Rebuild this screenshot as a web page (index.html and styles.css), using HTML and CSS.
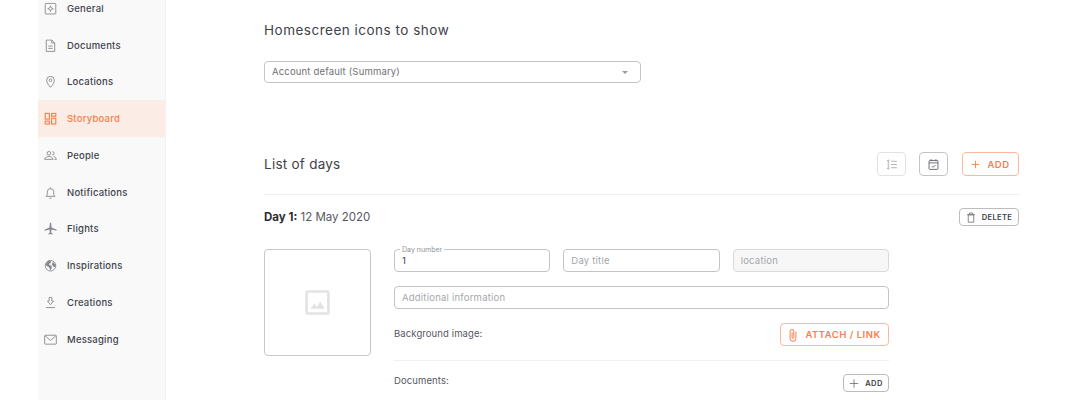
FILE: index.html
```html
<!DOCTYPE html>
<html lang="en">
<head>
    <meta charset="UTF-8">
    <title>Storyboard</title>
    <link rel="stylesheet" href="styles.css">
</head>
<body>
    <div class="app">
        <!-- Sidebar -->
        <nav class="sidebar">
            <a class="nav-item"><svg class="nav-icon" viewBox="0 0 16 16"><rect x="1.500" y="1.500" width="13" height="13" rx="1"/><circle cx="8" cy="8" r="2"/><path d="M8 4.300v1.700M8 10v1.700M4.300 8H6M10 8h1.700"/></svg>General</a>
            <a class="nav-item"><svg class="nav-icon" viewBox="0 0 16 16"><path d="M2.800 1h6.700l3.700 3.700V15H2.800zM9.500 1v3.700h3.700M5.300 8.500h5.400M5.300 11.300h5.400"/></svg>Documents</a>
            <a class="nav-item"><svg class="nav-icon" viewBox="0 0 16 16"><path d="M8 15C5.300 11.800 3.300 9.200 3.300 6.200a4.700 4.700 0 0 1 9.400 0c0 3-2 5.600-4.700 8.800z"/><circle cx="8" cy="6.200" r="1.600"/></svg>Locations</a>
            <a class="nav-item active"><svg class="nav-icon" viewBox="0 0 16 16"><rect x="1.500" y="1.500" width="5.200" height="7"/><rect x="9.300" y="1.500" width="5.200" height="3.500"/><rect x="1.500" y="11" width="5.200" height="3.500"/><rect x="9.300" y="7.500" width="5.200" height="7"/></svg>Storyboard</a>
            <a class="nav-item"><svg class="nav-icon" viewBox="0 0 16 16"><circle cx="6" cy="5" r="2.200"/><path d="M.8 12.500c.5-2.500 2.700-3.500 5.200-3.500s4.700 1 5.200 3.500zM10.300 3a2 2 0 0 1 0 4M12 8.800c1.700.4 2.700 1.500 3.200 3.700h-2.400"/></svg>People</a>
            <a class="nav-item"><svg class="nav-icon" viewBox="0 0 16 16"><path d="M2.500 12.500h11l-1.500-2V7a4 4 0 0 0-8 0v3.500zM6.800 14.800h2.400M8 1.500v1.500"/></svg>Notifications</a>
            <a class="nav-item"><svg class="nav-icon solid" viewBox="0 0 16 16"><path d="M7.300 .8h1.400l.6 5.700 6.200 2.700v1.300L9.200 9l-.4 3.800 1.900 1.300v.9L8 14.500 5.300 15v-.9l1.900-1.300L6.800 9 .5 10.500V9.200l6.200-2.700z"/></svg>Flights</a>
            <a class="nav-item"><svg class="nav-icon" viewBox="0 0 16 16"><circle cx="8" cy="8" r="6.500"/><path class="fill" d="M2.500 5.500l3-3.500 3.500.5-1 2.500-2 .5 1 2 2.500.5v2.500L8 14 6 9.500 2.500 8zM11 3.500L14 6.500l.5 2.500-2.500 1-1-2-1.500-1.500z"/></svg>Inspirations</a>
            <a class="nav-item"><svg class="nav-icon" viewBox="0 0 16 16"><path d="M6.300 1.500h3.400v4.500h2L8 10.500 4.300 6h2zM2.500 14h11"/></svg>Creations</a>
            <a class="nav-item"><svg class="nav-icon" viewBox="0 0 16 16"><rect x=".8" y="2.500" width="14.400" height="11" rx=".8"/><path d="M1.200 3L8 9l6.800-6"/></svg>Messaging</a>
        </nav>

        <main class="content">
            <h2 class="section-title first">Homescreen icons to show</h2>
            <div class="select">
                <span>Account default (Summary)</span>
                <span class="caret"></span>
            </div>

            <!-- List of days -->
            <div class="list-head">
                <h2 class="section-title days">List of days</h2>
                <div class="list-actions">
                    <button class="icon-btn faded"><svg viewBox="0 0 16 16"><path d="M4 2.500v11M2.500 3.500L4 2.500l1.500 1M2.500 12.500l1.500 1 1.500-1M7.500 4h7M7.500 8h7M7.500 12h7"/></svg></button>
                    <button class="icon-btn"><svg viewBox="0 0 16 16"><rect x="2.500" y="3" width="11" height="11" rx="1"/><path d="M2.500 6h11M5 1.500v2.500M11 1.500v2.500M6 10l1.500 1.500L10.500 8.500"/></svg></button>
                    <button class="btn-orange add-main"><svg viewBox="0 0 12 12"><path d="M6 1v10M1 6h10"/></svg>ADD</button>
                </div>
            </div>

            <div class="day-head">
                <p class="day-title"><b>Day 1:</b> 12 May 2020</p>
                <button class="btn-small delete"><svg viewBox="0 0 12 14"><path d="M2.500 3.500h7v9.500h-7zM1 3.500h10M4 3.500V1.200h4v2.300"/></svg>DELETE</button>
            </div>

            <div class="day-body">
                <div class="thumb">
                    <svg viewBox="0 0 24 24"><rect x="1.500" y="1.500" width="21" height="21" rx="1.500"/><path class="fill" d="M5 18l4-5 2.500 3 3-5L19 18z"/></svg>
                </div>
                <div class="day-form">
                    <div class="field-row">
                        <div class="field"><span class="field-label">Day number</span>1</div>
                        <div class="field placeholder">Day title</div>
                        <div class="field placeholder disabled">location</div>
                    </div>
                    <div class="field placeholder">Additional information</div>
                    <div class="form-row bg-row">
                        <span class="form-label">Background image:</span>
                        <button class="btn-orange attach"><svg viewBox="0 0 12 16"><path d="M9.500 4v8a3.500 3.500 0 0 1-7 0V3.500a2.200 2.200 0 0 1 4.400 0V11a1 1 0 0 1-2 0V5"/></svg>ATTACH / LINK</button>
                    </div>
                    <div class="form-row doc-row">
                        <span class="form-label">Documents:</span>
                        <button class="btn-small add-doc"><svg viewBox="0 0 12 12"><path d="M6 1v10M1 6h10"/></svg>ADD</button>
                    </div>
                </div>
            </div>
        </main>
    </div>
</body>
</html>
```

FILE: styles.css
```css
html, body {
    margin: 0;
    height: 400px;
    overflow: hidden;
    background: #fff;
    font-family: Inter, "Open Sans", sans-serif;
    color: #3a3d45;
}

.app {
    display: flex;
    height: 400px;
    margin-left: 38px;
}

/* Sidebar */
.sidebar {
    box-sizing: border-box;
    width: 128px;
    height: 400px;
    flex: none;
    overflow: hidden;
    background: #f9f9f9;
    border-right: 1px solid #f2f2f2;
}

.nav-item {
    display: flex;
    align-items: center;
    height: 36.75px;
    padding-left: 6px;
    gap: 10px;
    font-size: 9.5px;
    font-weight: 500;
    letter-spacing: .22px;
    color: #41444c;
    margin-top: 0;
    transform: translateY(-9.8px);
}

.nav-item.active {
    background: #fbece5;
    color: #f5814e;
}

.nav-icon {
    width: 13px;
    height: 13px;
    fill: none;
    stroke: #85888e;
    stroke-width: 1.100;
}

.nav-icon.solid {
    fill: #85888e;
    stroke: none;
}

.nav-icon .fill {
    fill: #85888e;
    stroke: none;
}

.active .nav-icon {
    stroke: #f5814e;
    stroke-width: 1.400;
}

/* Main content */
.content {
    width: 756px;
    margin-left: 98px;
    flex: none;
}

.section-title {
    margin: 0;
    font-size: 13.500px;
    font-weight: 400;
    letter-spacing: .5px;
    color: #3f4249;
}

.section-title.days {
    letter-spacing: .25px;
}

.section-title.first {
    padding-top: 22px;
    line-height: 17px;
}

.select {
    display: flex;
    justify-content: space-between;
    align-items: center;
    box-sizing: border-box;
    width: 377px;
    height: 22px;
    margin-top: 22px;
    padding: 0 12px 2px 7px;
    border: 1px solid #c4c4c4;
    border-radius: 4px;
    font-size: 9.500px;
    letter-spacing: .17px;
    color: #6e7075;
}

.caret {
    margin-top: 2px;
    border-left: 3px solid transparent;
    border-right: 3px solid transparent;
    border-top: 3px solid #9a9a9a;
}

.list-head {
    display: flex;
    justify-content: space-between;
    align-items: center;
    height: 24px;
    margin-top: 69px;
    padding-bottom: 18px;
    border-bottom: 1px solid #f0f0f0;
}

.list-actions {
    display: flex;
    gap: 13px;
    padding-right: 1px;
}

button {
    display: flex;
    align-items: center;
    justify-content: center;
    box-sizing: border-box;
    padding: 0;
    background: #fff;
    font-family: inherit;
    cursor: pointer;
}

.icon-btn {
    width: 29px;
    height: 24px;
    border: 1px solid #c4c4c4;
    border-radius: 4px;
}

.icon-btn svg {
    width: 13px;
    height: 13px;
    fill: none;
    stroke: #5f6269;
    stroke-width: 1.100;
}

.icon-btn.faded {
    border-color: #e2e2e2;
}

.icon-btn.faded svg {
    stroke: #a8a8a8;
}

.btn-orange {
    border: 1px solid #fbb89c;
    border-radius: 4px;
    color: #f5814e;
    font-weight: 600;
    letter-spacing: .5px;
}

.btn-orange svg {
    fill: none;
    stroke: #f5814e;
    stroke-width: 1.200;
}

.add-main {
    width: 57px;
    height: 24px;
    margin-left: 1px;
    gap: 7px;
    font-size: 9.500px;
}

.add-main svg {
    width: 9px;
    height: 9px;
}

.day-head {
    display: flex;
    justify-content: space-between;
    align-items: center;
    height: 18px;
    margin-top: 13px;
    padding-right: 1px;
}

.day-title {
    margin: 0;
    font-size: 11.500px;
    color: #55585f;
}

.day-title b {
    font-weight: 700;
    color: #2c2e33;
}

.btn-small {
    border: 1px solid #bcbcbc;
    border-bottom-width: 1.500px;
    border-radius: 4px;
    height: 18px;
    gap: 6px;
    font-size: 7.500px;
    font-weight: 600;
    letter-spacing: .4px;
    color: #3a3d45;
}

.btn-small svg {
    width: 10px;
    height: 11px;
    fill: none;
    stroke: #6a6d73;
    stroke-width: 1;
}

.delete {
    width: 60px;
}

.add-doc {
    width: 46px;
}

.day-body {
    display: flex;
    gap: 23px;
    margin-top: 23px;
}

.thumb {
    display: flex;
    align-items: center;
    justify-content: center;
    box-sizing: border-box;
    width: 107px;
    height: 107px;
    flex: none;
    border: 1px solid #c8c8c8;
    border-radius: 4px;
}

.thumb svg {
    width: 25px;
    height: 25px;
    fill: none;
    stroke: #e3e3e3;
    stroke-width: 2.500;
}

.thumb .fill {
    fill: #e3e3e3;
    stroke: none;
}

.day-form {
    width: 495px;
}

.field-row {
    display: flex;
    gap: 13px;
    margin-bottom: 14px;
}

.field {
    position: relative;
    display: flex;
    align-items: center;
    box-sizing: border-box;
    flex: 1;
    height: 23px;
    padding: 0 7px;
    border: 1px solid #c4c4c4;
    border-radius: 4px;
    font-size: 9.500px;
    letter-spacing: .22px;
    color: #3a3d45;
}

.field.placeholder {
    color: #a4a6aa;
}

.field.disabled {
    background: #f7f7f7;
    border-color: #dadada;
}

.field-label {
    position: absolute;
    left: 5px;
    top: -4px;
    padding: 0 2px;
    background: #fff;
    font-size: 7px;
    line-height: 8px;
    letter-spacing: 0;
    color: #909296;
}

.form-row {
    display: flex;
    justify-content: space-between;
    align-items: center;
}

.form-label {
    padding-bottom: 2px;
    font-size: 9.500px;
    letter-spacing: .1px;
    color: #55585f;
}

.bg-row {
    margin-top: 14px;
    padding-bottom: 14px;
    border-bottom: 1px solid #f0f0f0;
}

.doc-row {
    margin-top: 13px;
}

.doc-row .form-label {
    padding-bottom: 6px;
}

.attach {
    width: 109px;
    height: 23px;
    gap: 7px;
    font-size: 9.500px;
}

.attach svg {
    width: 10px;
    height: 14px;
}
```
